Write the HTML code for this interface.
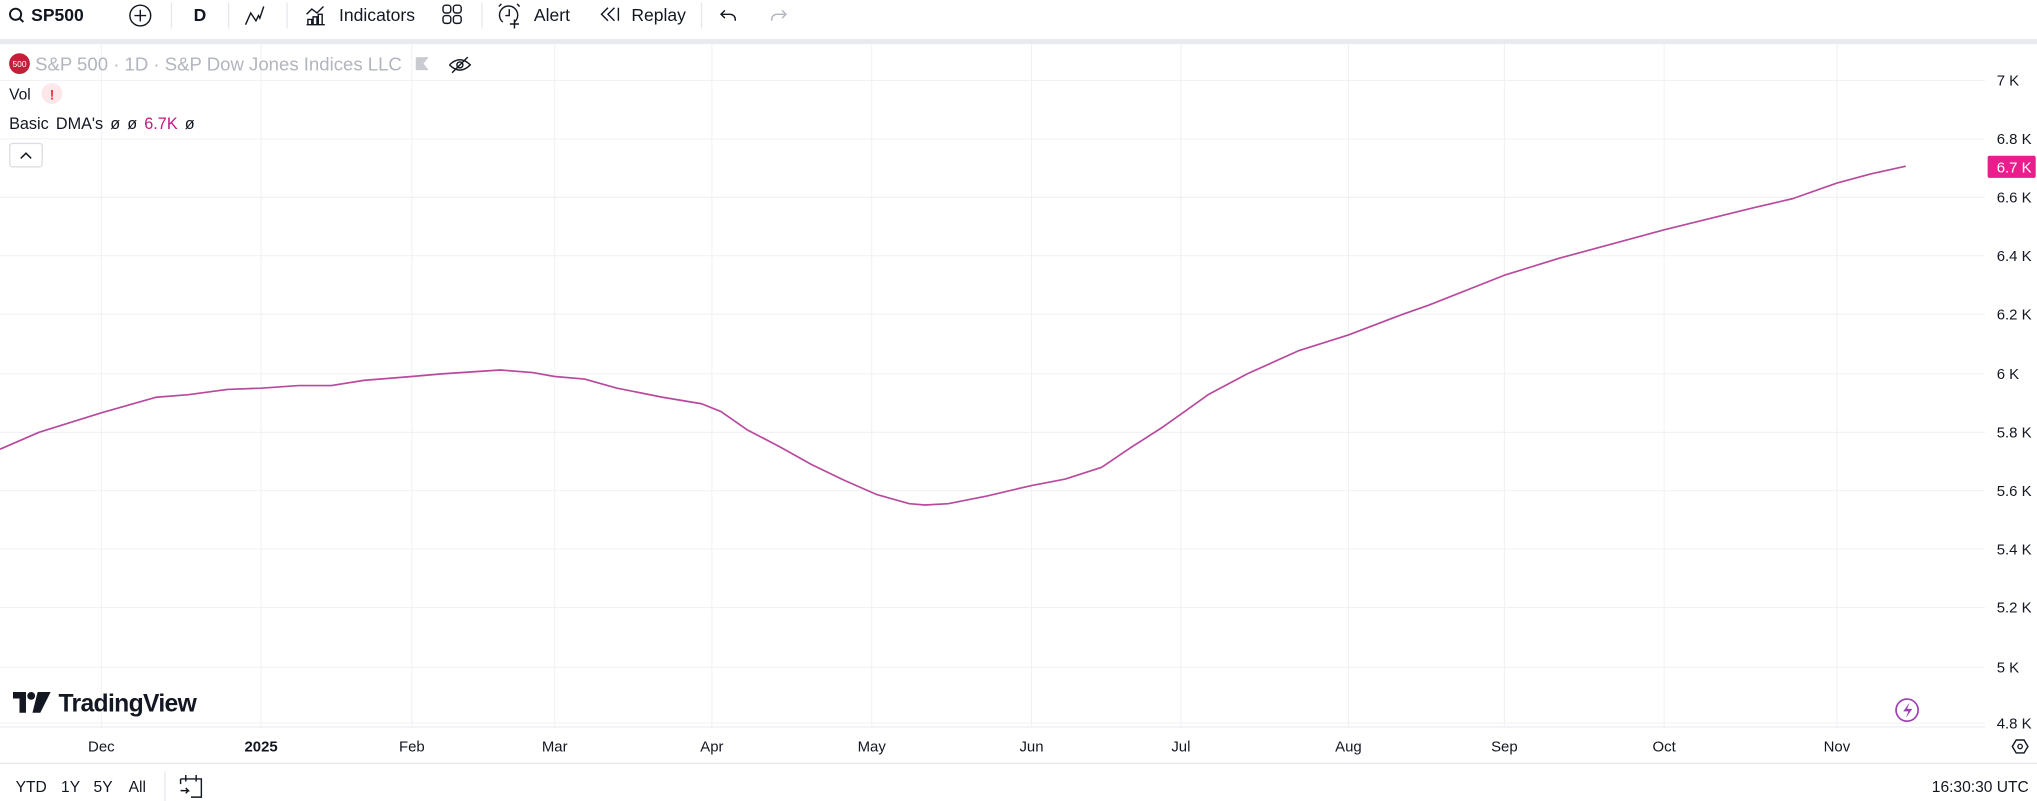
<!DOCTYPE html>
<html><head><meta charset="utf-8"><style>
html,body{margin:0;padding:0;background:#fff;width:2037px;height:801px;overflow:hidden}
svg{display:block;font-family:"Liberation Sans","DejaVu Sans",sans-serif}
</style></head><body>
<svg width="2037" height="801" viewBox="0 0 1568 617" preserveAspectRatio="none" xmlns="http://www.w3.org/2000/svg">
<rect width="1568" height="617" fill="#fff"/>
<g fill="#131722" font-size="13.5">
<circle cx="12" cy="11" r="4.3" fill="none" stroke="#131722" stroke-width="1.5"/><line x1="15" y1="14" x2="18" y2="17" stroke="#131722" stroke-width="1.5"/>
<text x="24" y="16" font-weight="bold">SP500</text>
<circle cx="108" cy="12" r="8" fill="none" stroke="#131722" stroke-width="1.1"/><path d="M108 7.5v9M103.5 12h9" stroke="#131722" stroke-width="1.1"/>
<text x="149" y="16" font-weight="bold">D</text>
<path d="M189 19l4-9 4 6 2-4 1 2 3-9" fill="none" stroke="#131722" stroke-width="1.1"/>
<path d="M236 19h14M237 19v-4h3v4M241 19v-6h3v6M245 19v-8h3v8M236 11l4-4 4 3 5-5" fill="none" stroke="#131722" stroke-width="1.1"/>
<text x="261" y="16">Indicators</text>
<g fill="none" stroke="#131722" stroke-width="1.1"><rect x="341" y="4" width="6" height="6" rx="2"/><rect x="349" y="4" width="6" height="6" rx="2"/><rect x="341" y="12" width="6" height="6" rx="2"/><rect x="349" y="12" width="6" height="6" rx="2"/></g>
<g fill="none" stroke="#131722" stroke-width="1.1"><path d="M396 17a7 7 0 1 0-9 0"/><path d="M392 7v5h-3M386 3l-2 2M398 3l2 2M396 15v7M392.5 18.5h7"/></g>
<text x="411" y="16">Alert</text>
<path d="M468 6l-5 5 5 5M473 6l-5 5 5 5M476 6v10" fill="none" stroke="#131722" stroke-width="1.1"/>
<text x="486" y="16">Replay</text>
<path d="M558 8l-3 3 3 3M555 11h7a4 4 0 0 1 4 4v1" fill="none" stroke="#131722" stroke-width="1.1"/>
<path d="M602 8l3 3-3 3M605 11h-7a4 4 0 0 0-4 4v1" fill="none" stroke="#b2b5be" stroke-width="1.1"/>
</g>
<g stroke="#e6e8ee" stroke-width="1"><line x1="132" y1="2" x2="132" y2="22"/><line x1="176" y1="2" x2="176" y2="22"/><line x1="221" y1="2" x2="221" y2="22"/><line x1="371" y1="2" x2="371" y2="22"/><line x1="540" y1="2" x2="540" y2="22"/></g>
<rect x="0" y="30" width="1568" height="4" fill="#e9eaee"/>
<g stroke="#f0f1f4" stroke-width="0.8">
<line x1="0" y1="62" x2="1528" y2="62"/><line x1="0" y1="107" x2="1528" y2="107"/><line x1="0" y1="152" x2="1528" y2="152"/><line x1="0" y1="197" x2="1528" y2="197"/><line x1="0" y1="242" x2="1528" y2="242"/><line x1="0" y1="288" x2="1528" y2="288"/><line x1="0" y1="333" x2="1528" y2="333"/><line x1="0" y1="378" x2="1528" y2="378"/><line x1="0" y1="423" x2="1528" y2="423"/><line x1="0" y1="468" x2="1528" y2="468"/><line x1="0" y1="514" x2="1528" y2="514"/><line x1="0" y1="557" x2="1528" y2="557"/>
<line x1="78" y1="34" x2="78" y2="560"/><line x1="201" y1="34" x2="201" y2="560"/><line x1="317" y1="34" x2="317" y2="560"/><line x1="427" y1="34" x2="427" y2="560"/><line x1="548" y1="34" x2="548" y2="560"/><line x1="671" y1="34" x2="671" y2="560"/><line x1="794" y1="34" x2="794" y2="560"/><line x1="909" y1="34" x2="909" y2="560"/><line x1="1038" y1="34" x2="1038" y2="560"/><line x1="1158" y1="34" x2="1158" y2="560"/><line x1="1281" y1="34" x2="1281" y2="560"/><line x1="1414" y1="34" x2="1414" y2="560"/>
</g>
<path d="M0 346 L30 333 L78 318 L120 306 L145 304 L175 300 L201 299 L230 297 L255 297 L280 293 L317 290 L340 288 L385 285 L410 287 L427 290 L450 292 L475 299 L510 306 L540 311 L555 317 L575 331 L600 344 L625 358 L650 370 L675 381 L700 388 L712 389 L730 388 L760 382 L794 374 L820 369 L848 360 L870 345 L895 329 L909 319 L930 304 L960 288 L1000 270 L1038 258 L1080 242 L1100 235 L1158 212 L1200 199 L1281 177 L1350 160 L1380 153 L1414 141 L1440 134 L1467 128" fill="none" stroke="#b84a9e" stroke-width="1.3" stroke-linejoin="round"/>
<circle cx="15" cy="49" r="8" fill="#c41e3a"/><text x="15" y="51.5" font-size="6.5" fill="#fff" text-anchor="middle">500</text>
<text x="27" y="54.5" font-size="14.3" fill="#b2b5be">S&amp;P 500 · 1D · S&amp;P Dow Jones Indices LLC</text>
<path d="M320 44h10l-4 5 4 5h-10z" fill="#c9cbd1"/>
<g fill="none" stroke="#131722" stroke-width="1.1"><path d="M346 50q8-8 16 0q-8 8-16 0"/><circle cx="354" cy="50" r="2.3"/><line x1="348" y1="56" x2="360" y2="44"/></g>
<text x="7" y="76.5" font-size="12" fill="#131722">Vol</text>
<circle cx="40" cy="72" r="8" fill="#fde7ea"/><text x="40" y="76.5" font-size="11" font-weight="bold" fill="#f23645" text-anchor="middle">!</text>
<text x="7" y="99.5" font-size="12.5" fill="#131722" word-spacing="2">Basic DMA's  ø  ø  <tspan fill="#c2187d">6.7K</tspan>  ø</text>
<rect x="7.5" y="110.5" width="25" height="18" rx="2" fill="#fff" stroke="#dcdee3"/>
<path d="M16 122l4-4 4 4" fill="none" stroke="#131722" stroke-width="1.2"/>
<g font-size="11.5" fill="#131722">
<text x="1537" y="66">7 K</text><text x="1537" y="111">6.8 K</text><text x="1537" y="156">6.6 K</text><text x="1537" y="201">6.4 K</text><text x="1537" y="246">6.2 K</text><text x="1537" y="292">6 K</text><text x="1537" y="337">5.8 K</text><text x="1537" y="382">5.6 K</text><text x="1537" y="427">5.4 K</text><text x="1537" y="472">5.2 K</text><text x="1537" y="518">5 K</text><text x="1537" y="561">4.8 K</text>
</g>
<rect x="1530" y="120" width="37" height="17" rx="1.5" fill="#e91e8c"/>
<text x="1537" y="133" font-size="11.5" fill="#fff">6.7 K</text>
<path d="M10 533h10v16h-5v-11h-5z" fill="#131722"/><circle cx="24" cy="536" r="3" fill="#131722"/><path d="M29 533h10l-8 16h-6z" fill="#131722"/>
<text x="45" y="548" font-size="19" font-weight="bold" fill="#131722" letter-spacing="-0.5">TradingView</text>
<circle cx="1468" cy="547" r="8.5" fill="none" stroke="#9c3fb0" stroke-width="1.3"/><path d="M1470 541l-5 7h4l-2 5 5-7h-4z" fill="#9c3fb0"/>
<line x1="0" y1="560" x2="1528" y2="560" stroke="#eceef2"/>
<g font-size="11.5" fill="#131722" text-anchor="middle">
<text x="78" y="579">Dec</text><text x="201" y="579" font-weight="bold">2025</text><text x="317" y="579">Feb</text><text x="427" y="579">Mar</text><text x="548" y="579">Apr</text><text x="671" y="579">May</text><text x="794" y="579">Jun</text><text x="909" y="579">Jul</text><text x="1038" y="579">Aug</text><text x="1158" y="579">Sep</text><text x="1281" y="579">Oct</text><text x="1414" y="579">Nov</text>
</g>
<path d="M1549 575l3-5h6l3 5-3 5h-6z" fill="none" stroke="#131722" stroke-width="1.1"/><circle cx="1555" cy="575" r="1.7" fill="none" stroke="#131722"/>
<line x1="0" y1="588" x2="1568" y2="588" stroke="#e6e8ee"/>
<g font-size="12" fill="#131722">
<text x="12" y="610">YTD</text><text x="47" y="610">1Y</text><text x="72" y="610">5Y</text><text x="99" y="610">All</text>
<text x="1487" y="610">16:30:30 UTC</text>
</g>
<line x1="127" y1="594" x2="127" y2="617" stroke="#e6e8ee"/>
<g fill="none" stroke="#131722" stroke-width="1.1"><path d="M139 600h16v14h-8M139 600v4M143 597v5M151 597v5M139 609h6l-2-2M145 609l-2 2"/></g>
</svg>
</body></html>
